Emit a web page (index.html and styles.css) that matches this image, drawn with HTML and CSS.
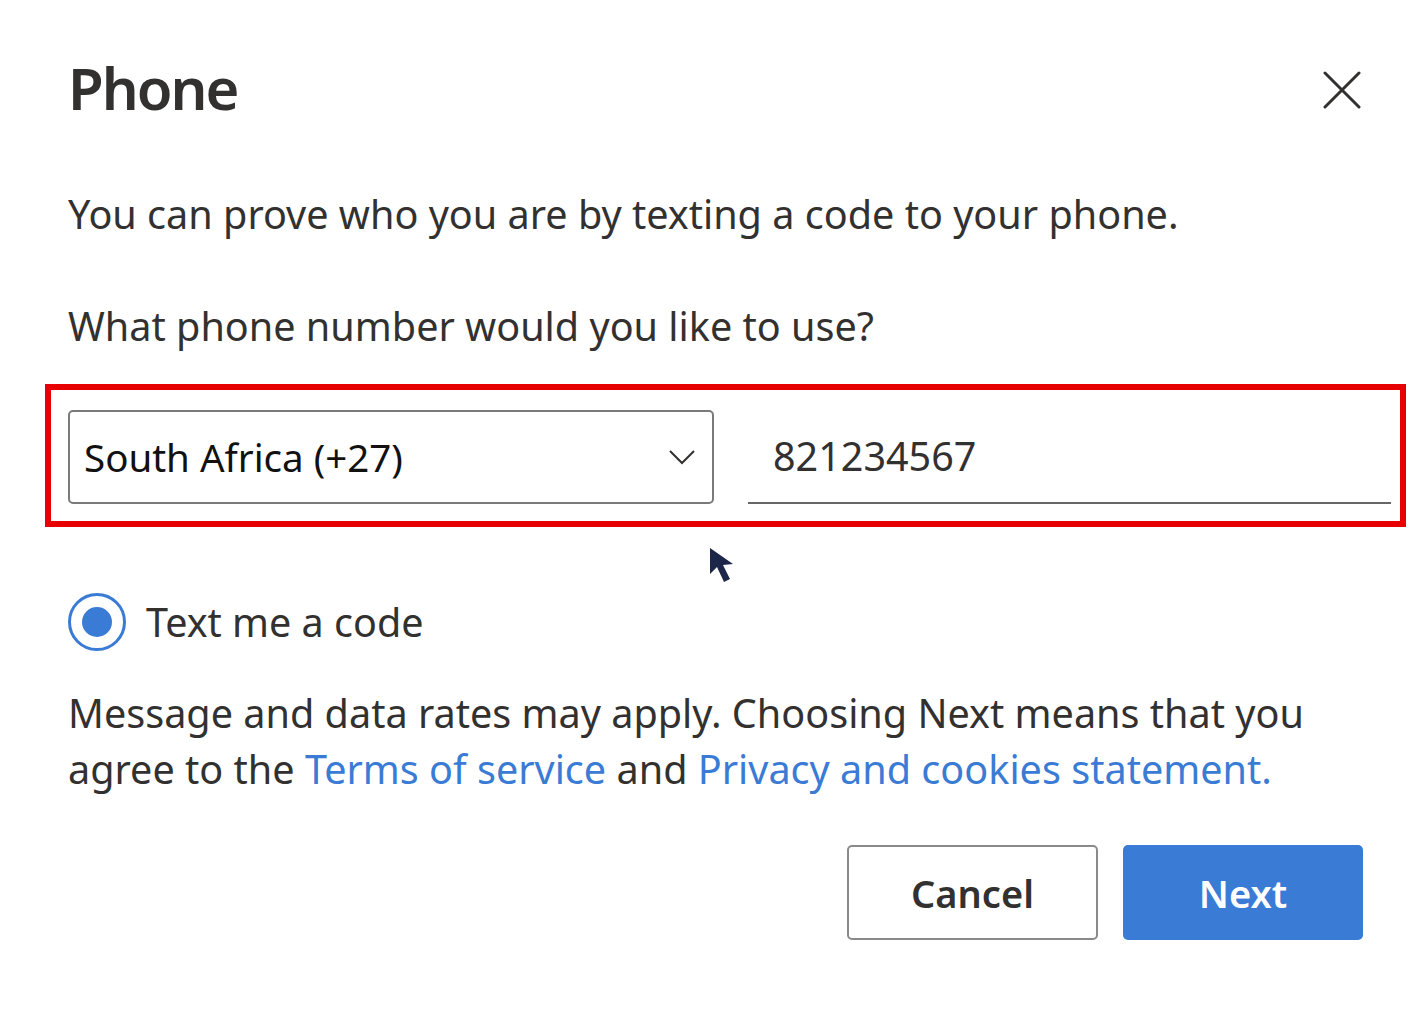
FILE: index.html
```html
<!DOCTYPE html>
<html>
<head>
<meta charset="utf-8">
<link rel="stylesheet" href="styles.css">
</head>
<body>
<div class="dialog">
  <div class="header">
    <h1 class="title">Phone</h1>
    <button class="close" aria-label="Close">
      <svg width="38" height="38" viewBox="0 0 38 38"><path d="M2 2 L36 36 M36 2 L2 36" stroke="#323130" stroke-width="3" stroke-linecap="round" fill="none"/></svg>
    </button>
  </div>
  <p class="lead">You can prove who you are by texting a code to your phone.</p>
  <p class="question">What phone number would you like to use?</p>
  <div class="highlight">
    <div class="select">
      <span class="select-text">South Africa (+27)</span>
      <svg class="chevron" width="28" height="16" viewBox="0 0 28 16"><path d="M2 2 L14 14 L26 2" stroke="#323130" stroke-width="2" fill="none"/></svg>
    </div>
    <div class="phone-input">821234567</div>
  </div>
  <div class="radio-row">
    <span class="radio"><span class="dot"></span></span>
    <span class="radio-label">Text me a code</span>
  </div>
  <p class="note">Message and data rates may apply. Choosing Next means that you agree to the <a href="#">Terms of service</a> and <a href="#">Privacy and cookies statement.</a></p>
  <div class="actions">
    <button class="btn btn-cancel">Cancel</button>
    <button class="btn btn-next">Next</button>
  </div>
  <svg class="cursor" width="32" height="40" viewBox="0 0 32 40"><path d="M2 2 L2 28 L9 21 L16 36 L22 33 L15 19 L25 18 Z" fill="#1c2648"/></svg>
</div>
</body>
</html>
```
FILE: styles.css
```css
html, body {
  margin: 0;
  padding: 0;
  background: #fff;
}
body {
  font-family: "Noto Sans", "Open Sans", sans-serif;
  color: #323130;
}
.dialog {
  position: relative;
  padding: 0 37px 0 68px;
}
.header {
  display: flex;
  justify-content: space-between;
  align-items: flex-start;
  padding-top: 48px;
}
.title {
  margin: 0;
  font-size: 58px;
  font-weight: 600;
  letter-spacing: -2px;
  line-height: 80px;
  color: #323130;
}
.close {
  border: 0;
  background: none;
  padding: 0;
  margin-top: 23px;
  margin-right: 30px;
  width: 38px;
  height: 38px;
}
.close svg { display: block; }
.lead, .question, .note {
  margin: 0;
  font-size: 39.6px;
  line-height: 56px;
}
.lead { margin-top: 58px; }
.question { margin-top: 56px; }
.highlight {
  margin: 30px 0 0 -23px;
  width: 1332px;
  height: 111px;
  border: 6px solid #e80000;
  padding: 20px 0 0 17px;
  box-sizing: content-box;
  display: flex;
  align-items: flex-start;
  gap: 34px;
}
.select {
  width: 646px;
  height: 94px;
  box-sizing: border-box;
  border: 2px solid #7a7a7a;
  border-radius: 5px;
  display: flex;
  align-items: center;
  justify-content: space-between;
  padding: 0 16px 0 14px;
  font-size: 38.5px;
  color: #111;
}
.chevron { display: block; }
.phone-input {
  width: 643px;
  height: 94px;
  box-sizing: border-box;
  border-bottom: 2px solid #666;
  padding: 0 0 0 25px;
  display: flex;
  align-items: center;
  font-size: 39.5px;
  color: #323130;
}
.radio-row {
  display: flex;
  align-items: center;
  margin-top: 66px;
  gap: 20px;
}
.radio {
  width: 58px;
  height: 58px;
  box-sizing: border-box;
  border: 3px solid #3a7bd5;
  border-radius: 50%;
  display: flex;
  align-items: center;
  justify-content: center;
}
.dot {
  width: 30px;
  height: 30px;
  border-radius: 50%;
  background: #3a7bd5;
}
.radio-label {
  font-size: 39.5px;
}
.note { margin-top: 34px; }
.note a {
  color: #3a7bd5;
  text-decoration: none;
}
.actions {
  display: flex;
  justify-content: flex-end;
  gap: 25px;
  margin-top: 48px;
  padding-right: 28px;
}
.btn {
  font-family: "Noto Sans", "Open Sans", sans-serif;
  font-size: 38px;
  font-weight: 600;
  height: 95px;
  border-radius: 5px;
  padding: 0;
}
.btn-cancel {
  width: 251px;
  background: #fff;
  border: 2px solid #8a8a8a;
  color: #323130;
}
.btn-next {
  width: 240px;
  background: #3a7bd5;
  border: 0;
  color: #fff;
}
.cursor {
  position: absolute;
  left: 708px;
  top: 546px;
}
```
